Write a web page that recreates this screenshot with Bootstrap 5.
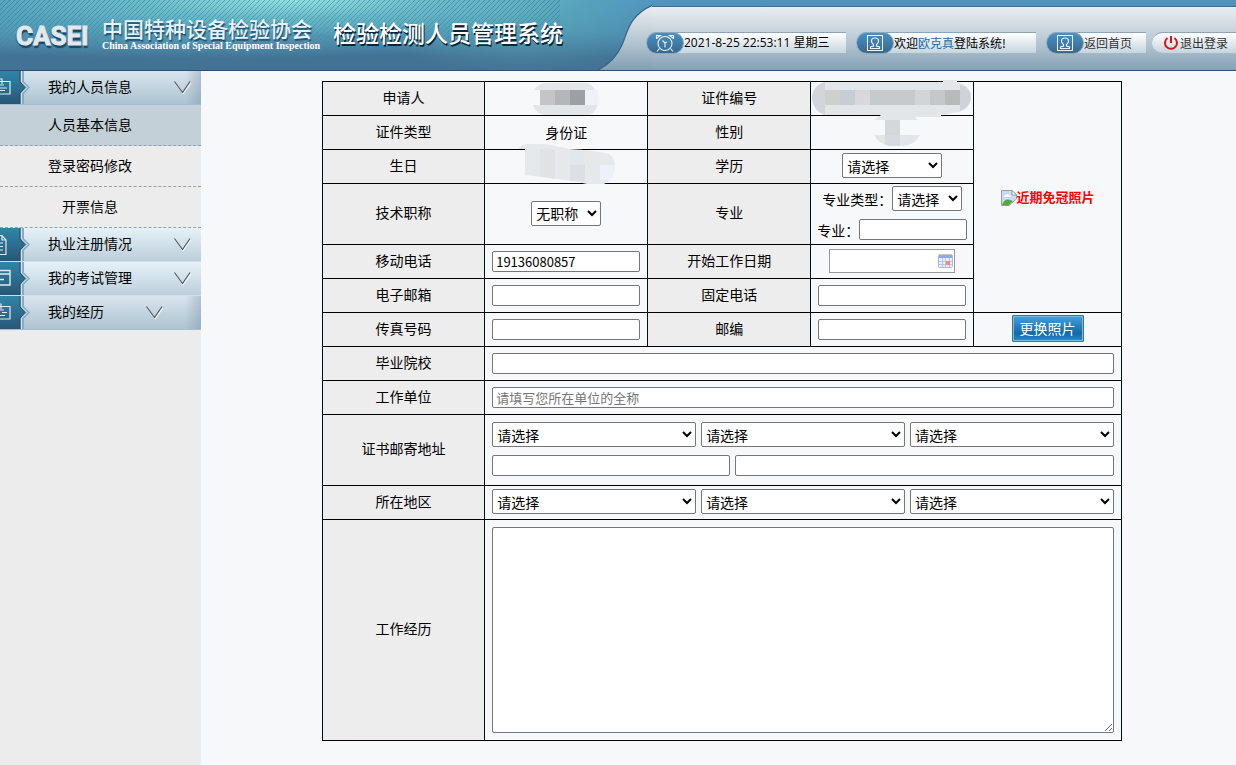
<!DOCTYPE html>
<html lang="zh-CN">
<head>
<meta charset="utf-8">
<meta name="viewport" content="width=device-width, initial-scale=1">
<title>检验检测人员管理系统</title>
<link href="https://cdn.jsdelivr.net/npm/bootstrap@5.3.0/dist/css/bootstrap.min.css" rel="stylesheet">
<style>
  body { font: 14px/20px "Noto Sans CJK SC", sans-serif; color: #000; background: #f7f8fa; }
  a { text-decoration: none; }

  /* top banner */
  .banner { position: relative; height: 71px; overflow: hidden; border-bottom: 1px solid #2c4f72;
    background: radial-gradient(ellipse 300px 36px at 290px 0, rgba(150,230,228,.9) 0, rgba(120,205,210,.5) 50%, rgba(90,170,190,0) 100%),
      radial-gradient(ellipse 460px 60px at 200px 0, rgba(95,180,192,.8) 0, rgba(90,175,190,.6) 50%, rgba(80,160,190,0) 100%),
      radial-gradient(ellipse 160px 60px at 520px 14px, rgba(95,175,185,.7) 0, rgba(80,160,190,0) 100%),
      linear-gradient(#4f93c1 0, #4b8ab0 45%, #427294 80%, #427294 100%); }
  .banner::before { content: ""; position: absolute; inset: 0 auto 0 0; width: 560px;
    background: url("data:image/svg+xml,%3Csvg xmlns='http://www.w3.org/2000/svg' width='5' height='5'%3E%3Cpath d='M-1 6L6-1M-1 1L1-1M4 6L6 4' stroke='%23205f7f' stroke-width='.7'/%3E%3C/svg%3E");
    -webkit-mask-image: linear-gradient(#000 0, rgba(0,0,0,.6) 25px, transparent 50px);
    mask-image: linear-gradient(#000 0, rgba(0,0,0,.6) 25px, transparent 50px); opacity: .6; }
  .brand { position: relative; }
  .logo-word { width: 74px; font: bold 26px/40px Roboto, "Liberation Sans", sans-serif; color: #e3e8ec;
    -webkit-text-stroke: 1px #e3e8ec; text-shadow: 1px 3px 1px #1d4663, -1px 1px 1px #2c5f7c; }
  .org-cn { font-size: 21px; line-height: 24px; font-weight: 500; color: #e6f2f7; text-shadow: 1px 2px 1px #24506e; }
  .org-en { font: bold 10px/12px "Liberation Serif", serif; color: #fff; }
  .sys-name { font-size: 23px; line-height: 32px; font-weight: 500; color: #fff; text-shadow: 1px 2px 0 #0d2534; margin: 0 0 0 13px; }
  .curve { width: 54px; height: 65px; flex: none; }
  .panel { margin-top: 6px; height: 65px; border-top: 1px solid #3f6f92; background: linear-gradient(#eaeef2, #b6c7d2 55%, #829fb5); font-size: 12px; }
  .pill { height: 22px; margin: 25px 10px 0 0; display: flex; align-items: center; white-space: nowrap; background: linear-gradient(#fff, #c6d5de);
    border-top: 1px solid #8ca6b8; border-bottom: 1px solid #a4b8c5; border-radius: 11px 0 0 11px; color: #000; }
  .pill time { font-family: "Open Sans", "Noto Sans CJK SC", sans-serif; }
  .pill-cap { width: 38px; height: 22px; flex: none; border-radius: 11px; border: 1px solid #89a9c0; background: linear-gradient(#4a90c2, #38688e);
    display: flex; align-items: center; justify-content: center; }
  .pill-home, .pill-exit { color: #333; }
  .w-clock { width: 200px; margin-left: -6px; } .w-user { width: 180px; }
  .w-home { width: 100px; margin-right: 6px; } .w-exit { width: 84px; margin-right: 0; }
  .user-link { color: #1a6ca8; }

  /* side menu */
  .side { width: 201px; flex: none; background: #ececec; }
  .side a { color: #000; }
  .side-head { height: 34px; display: flex; align-items: center; line-height: 18px; border-bottom: 1px solid #d2dfe8; background: linear-gradient(#e6f1f8, #bccfdb); }
  .side-head.shaded { border-bottom-color: #a9b9d8; background: linear-gradient(90deg, transparent 185px, rgba(120,145,160,.4)), linear-gradient(#d9e5ee, #adc3d1); }
  .side-head svg.tab { width: 32px; height: 33px; margin-right: 16px; flex: none; }
  .side-head svg.vee { width: 17px; height: 13px; margin-left: 42px; }
  .side-sub a { display: block; height: 41px; line-height: 39px; padding-right: 21px; text-align: center; border-bottom: 1px dashed #86a7ba; }
  .side-sub a.current { background: #c3d0d7; }

  /* form table */
  .main-area { padding: 10px 0 24px 7px; min-width: 0; }
  .form-grid { --bs-table-bg: transparent; --bs-table-color: #000; max-width: 800px; margin: 0 auto; table-layout: fixed; border-color: #000; text-align: center; vertical-align: middle; }
  .form-grid > tbody > tr > * { height: 34px; padding: 0 0 2px; border-color: #000f0f; color: #000; }
  .form-grid > tbody > tr > th { font-weight: 400; background: #ededed; padding-bottom: 4px; }
  .form-grid > tbody > tr > td.wide { padding: 0 7px 2px; }
  .form-grid > tbody > tr > td.roomy { padding: 7px; }
  .form-grid input, .form-grid textarea { border: 1px solid #767676; border-radius: 2px; background: #fff; font-size: 13px; padding: 1px 3px; color: #000; }
  .form-grid input { height: 21px; width: 148px; vertical-align: middle; }
  .form-grid select { height: 25px; font-size: 14px; border: 1px solid #767676; border-radius: 2px; background-color: #fff; color: #000; min-width: 0; }
  .form-grid ::placeholder { color: #757575; }
  .form-grid .flex-fill { width: 0; }
  .form-grid textarea { display: block; width: 100%; height: 206px; resize: both; }
  .w-70 { width: 70px; } .w-edu { width: 100px; }
  .form-grid .in-major { width: 108px; }
  .form-grid .in-area { width: 238px; }
  .tall { height: 61px !important; } .taller { height: 71px !important; } .tallest { height: 221px !important; }
  .gap-5px { gap: 5px; }
  .date-box { width: 126px; height: 24px; border: 1px solid #999; background: #fff; }
  .form-grid .date-box input { border: 0; width: 108px; height: 20px; }
  .veil { display: block; width: 162px; height: 33px; margin: 0 auto -2px; overflow: visible; }
  .photo-alt { font-size: 13px; font-weight: 700; color: #f00; }
  .btn-photo { height: 27px; width: 72px; padding: 0 0 2px; font-size: 14px; line-height: 20px; color: #fff; border: 1px solid #3f7777; border-radius: 1px;
    background: linear-gradient(#46a0dc, #0f69ab 70%, #2f8dcc); box-shadow: inset 0 0 0 1px #78bfe6; }
  .btn-photo:hover { color: #fff; }
</style>
</head>
<body class="d-flex flex-column min-vh-100">

<svg class="position-absolute" width="0" height="0" aria-hidden="true">
  <linearGradient id="teal" x2="0" y2="1"><stop stop-color="#2f86a8"/><stop offset="1" stop-color="#2a5675"/></linearGradient>
  <symbol id="vee" viewBox="0 0 17 13"><path d="M1.500 2L9 13L17 2" fill="none" stroke="#fff"/><path d="M.5.500L8.500 11.500L16 .5" fill="none" stroke="#4b5960" stroke-width="1.100"/></symbol>
  <symbol id="portrait" viewBox="0 0 18 18"><rect x="1.500" y="1.500" width="15" height="15" fill="none" stroke="#e8f3fa"/><path d="M4.500 14.500V13l3-1V10.500C6 9.500 5.500 8.500 5.500 7C5.500 5 7 4 9 4S12.500 5 12.500 7C12.500 8.500 12 9.500 10.500 10.500V12l3 1V14.500z" fill="none" stroke="#e8f3fa" stroke-width="1.200"/></symbol>
  <symbol id="tab-base" viewBox="0 0 32 33">
    <path d="M20 0h4v10.500l6 6l-6 6V33h-4z" fill="#86abc2"/><path d="M21.500 0v11l6 5.500l-6 5.500v11" fill="none" stroke="#d3e3ed"/>
    <path d="M0 0h20v11l5 5.500l-5 5.500v11H0z" fill="url(#teal)"/><path d="M20 0v11l5 5.500l-5 5.500v11" fill="none" stroke="#234e69"/>
  </symbol>
</svg>

<header class="banner d-flex">
  <div class="brand d-flex align-items-start ps-3 text-nowrap">
    <div class="logo-word mt-3">CASEI</div>
    <div class="mt-3 ps-2 ms-1">
      <div class="org-cn">中国特种设备检验协会</div>
      <div class="org-en">China Association of Special Equipment Inspection</div>
    </div>
    <h1 class="sys-name mt-3">检验检测人员管理系统</h1>
  </div>
  <div class="d-flex ms-auto flex-shrink-0 position-relative">
    <svg class="curve mt-auto" viewBox="0 0 54 65" aria-hidden="true">
      <linearGradient id="silver" x2="0" y2="1"><stop stop-color="#eaeef2"/><stop offset=".55" stop-color="#b6c7d2"/><stop offset="1" stop-color="#829fb5"/></linearGradient>
      <path d="M0 65C12 59 19 51 24 40S31 10 54 .5V65z" fill="url(#silver)"/>
      <path d="M0 65C12 59 19 51 24 40S31 10 54 .5" fill="none" stroke="#3a668a" stroke-width="1.300"/>
    </svg>
    <div class="panel d-flex">
      <div class="pill w-clock">
        <span class="pill-cap"><svg width="20" height="18" viewBox="0 0 20 18" fill="none" stroke="#e8f3fa" stroke-width="1.100" aria-hidden="true"><circle cx="10" cy="9.500" r="7"/><path d="M1.500 5V1.500H6.500M18.500 5V1.500H13.500M1.500 4.500L5.500 1.500M18.500 4.500L14.500 1.500M4.500 14.500L2 17.500M15.500 14.500L18 17.500M7.500 6.500L10 9v4.500M10 9l2-1"/></svg></span>
        <time>2021-8-25 22:53:11 星期三</time>
      </div>
      <div class="pill w-user">
        <span class="pill-cap"><svg width="18" height="18" aria-hidden="true"><use href="#portrait"/></svg></span>
        <span>欢迎<a href="#" class="user-link">欧克真</a>登陆系统!</span>
      </div>
      <a href="#" class="pill pill-home w-home">
        <span class="pill-cap"><svg width="18" height="18" aria-hidden="true"><use href="#portrait"/></svg></span>返回首页
      </a>
      <a href="#" class="pill pill-exit w-exit ps-2">
        <svg class="ms-1" width="16" height="16" viewBox="0 0 16 16" fill="none" stroke="#dc1414" stroke-width="2" aria-hidden="true"><path d="M7 1v7M3.500 3A6 6 0 1 0 10.500 3"/></svg>退出登录
      </a>
    </div>
  </div>
</header>

<div class="d-flex flex-grow-1">
  <nav class="side">
    <a href="#" class="side-head shaded">
      <svg class="tab" viewBox="0 0 32 33" aria-hidden="true"><use href="#tab-base"/><path d="M0 10.500h10V23H0M0 14h4M0 17h7M0 19.500h5M-1 8h3v5" fill="none" stroke="#dfeaf1" stroke-width="1.200"/></svg>
      <span class="pb-1">我的人员信息</span><svg class="vee" aria-hidden="true"><use href="#vee"/></svg></a>
    <div class="side-sub">
      <a href="#" class="current">人员基本信息</a>
      <a href="#">登录密码修改</a>
      <a href="#">开票信息</a>
    </div>
    <a href="#" class="side-head">
      <svg class="tab" viewBox="0 0 32 33" aria-hidden="true"><use href="#tab-base"/><path d="M0 7.500h2L6 12V26.500H0M2 7.500V12H6M0 15h3M0 18.500h3M0 22h3" fill="none" stroke="#dfeaf1" stroke-width="1.200"/></svg>
      <span class="pb-1">执业注册情况</span><svg class="vee" aria-hidden="true"><use href="#vee"/></svg></a>
    <a href="#" class="side-head">
      <svg class="tab" viewBox="0 0 32 33" aria-hidden="true"><use href="#tab-base"/><path d="M0 8.500h10V23H0M0 12h10M0 17.500h4" fill="none" stroke="#dfeaf1" stroke-width="1.400"/></svg>
      <span class="pb-1">我的考试管理</span><svg class="vee" aria-hidden="true"><use href="#vee"/></svg></a>
    <a href="#" class="side-head shaded">
      <svg class="tab" viewBox="0 0 32 33" aria-hidden="true"><use href="#tab-base"/><path d="M0 10.500h10V23H0M0 14h4M2 16.500h5M0 19.500h5M-1 8h2v5" fill="none" stroke="#dfeaf1" stroke-width="1.200"/></svg>
      <span class="pb-1">我的经历</span><svg class="vee" aria-hidden="true"><use href="#vee"/></svg></a>
  </nav>

  <main class="main-area flex-grow-1">
    <form>
      <table class="table table-bordered form-grid">
        <colgroup><col style="width:20.300%"><col style="width:20.400%"><col style="width:20.400%"><col style="width:20.400%"><col></colgroup>
        <tbody>
          <tr>
            <th scope="row">申请人</th>
            <td><svg class="veil" viewBox="0 0 162 33" aria-hidden="true"><path d="M49 8Q54 1 61 1H101Q107 2 110 8zM48 23H113Q109 33 102 33H60Q50 31 48 23z" fill="#e2e6e9"/><path d="M55 8h15v15H55z" fill="#c5c5c5"/><path d="M70 8h15v15H70z" fill="#b5b6b9"/><path d="M85 8h15v15H85z" fill="#9e9fa4"/><path d="M100 8h12q3 7 1 15h-13z" fill="#eef2f6"/></svg></td>
            <th scope="row">证件编号</th>
            <td><svg class="veil" viewBox="0 0 162 33" aria-hidden="true"><path d="M14 0H132V-2H146V0Q160 3 160 16Q158 28 148 30L130 33V35H70V33H14Q2 29 1 16Q2 3 14 0z" fill="#e2e6e9"/><path d="M14 0v33Q2 29 1 16Q2 3 14 0z" fill="#d2d6da"/><path d="M14 8h15v15H14z" fill="#cfd0cb"/><path d="M29 8h15v15H29z" fill="#c8ccd5"/><path d="M44 8h15v15H44z" fill="#d6d8dc"/><path d="M59 8h45v15H59z" fill="#c7caca"/><path d="M104 8h15v15h-15z" fill="#d2d4d8"/><path d="M119 8h15v15h-15z" fill="#c5c7c8"/><path d="M134 8h15v15h-15z" fill="#b9bbbb"/><path d="M149 3Q160 5 160 16Q159 25 149 29z" fill="#cfd2d8"/></svg></td>
            <td rowspan="6"><svg width="16" height="16" viewBox="0 0 16 16" aria-hidden="true"><path d="M.5.500H11L15.500 5V9L8 15.500H.5z" fill="#c8daf8" stroke="#9a9a9a"/><path d="M11 .5V5h4.500z" fill="#fff" stroke="#9a9a9a"/><path d="M3 7q0-2 2-2q1-2 3 0q2 0 2 2z" fill="#fff"/><path d="M1 15q3-7 8-5l3 1l-4 4z" fill="#54a93c"/><path d="M9 16l7-6" stroke="#fff" stroke-width="1.500"/></svg><span class="photo-alt">近期免冠照片</span></td>
          </tr>
          <tr>
            <th scope="row">证件类型</th><td>身份证</td>
            <th scope="row">性别</th>
            <td><svg class="veil" viewBox="0 0 162 33" aria-hidden="true"><path d="M70-1H102Q104 2 107 4H63Q66 2 70-1zM63 19H109Q103 30 91 30H78Q68 28 63 19z" fill="#e2e6e9"/><path d="M74 4h15v15H74z" fill="#d5d7d9"/><path d="M74 19h15v11H78L74 28z" fill="#d6dbe0"/></svg></td>
          </tr>
          <tr>
            <th scope="row">生日</th>
            <td><svg class="veil" viewBox="0 0 162 33" aria-hidden="true"><path d="M33-1Q36-6 44-6H60L76-3L84-1Q110 0 124 4Q130 8 130 17Q129 30 119 34H102L88 31L40 25V-1z" fill="#e6e9eb"/><path d="M55-1h15v30L55 26z" fill="#e0e2e3"/><path d="M85 0h15v15H85z" fill="#e2e7eb"/><path d="M85 15h15v16H85z" fill="#dce0e4"/><path d="M115 15h15q0 10-5 15h-10z" fill="#eef2f8"/></svg></td>
            <th scope="row"><label for="edu">学历</label></th>
            <td><select id="edu" class="w-edu"><option>请选择</option></select></td>
          </tr>
          <tr>
            <th scope="row" class="tall"><label for="rank">技术职称</label></th>
            <td><select id="rank" class="w-70"><option>无职称</option></select></td>
            <th scope="row">专业</th>
            <td>
              <div class="d-flex flex-column gap-2 px-1">
                <div class="d-flex align-items-center justify-content-center"><label for="mtype">专业类型：</label><select id="mtype" class="w-70"><option>请选择</option></select></div>
                <div class="d-flex align-items-center justify-content-center"><label for="major">专业：</label><input id="major" class="in-major" type="text"></div>
              </div>
            </td>
          </tr>
          <tr>
            <th scope="row"><label for="mobile">移动电话</label></th><td><input id="mobile" type="text" value="19136080857"></td>
            <th scope="row"><label for="start">开始工作日期</label></th>
            <td><div class="date-box d-flex align-items-center mx-auto"><input id="start" type="text">
              <svg width="16" height="14" viewBox="0 0 16 14" aria-hidden="true"><rect x=".5" y=".5" width="14" height="13" rx="1" fill="#e9f0fa" stroke="#a9bddf"/><path d="M1 1h13v3H1z" fill="#8eaae0"/><path d="M1 .5h13" stroke="#c9c5bd"/><path d="M1 7.500h13M1 10.500h13M4.500 4v9M7.500 4v9M11.500 4v9" stroke="#b5c6e2"/><path d="M8 7h4v4H8z" fill="#ee8d76"/></svg></div></td>
          </tr>
          <tr>
            <th scope="row"><label for="mail">电子邮箱</label></th><td><input id="mail" type="text"></td>
            <th scope="row"><label for="tel">固定电话</label></th><td><input id="tel" type="text"></td>
          </tr>
          <tr>
            <th scope="row"><label for="fax">传真号码</label></th><td><input id="fax" type="text"></td>
            <th scope="row"><label for="zip">邮编</label></th><td><input id="zip" type="text"></td>
            <td><button type="button" class="btn btn-photo">更换照片</button></td>
          </tr>
          <tr>
            <th scope="row"><label for="school">毕业院校</label></th>
            <td colspan="4" class="wide"><input id="school" class="w-100" type="text"></td>
          </tr>
          <tr>
            <th scope="row"><label for="work">工作单位</label></th>
            <td colspan="4" class="wide"><input id="work" class="w-100" type="text" placeholder="请填写您所在单位的全称"></td>
          </tr>
          <tr>
            <th scope="row" class="taller"><label for="mprov">证书邮寄地址</label></th>
            <td colspan="4" class="wide">
              <div class="d-flex gap-5px mb-2">
                <select id="mprov" class="flex-fill"><option>请选择</option></select>
                <select class="flex-fill" aria-label="市"><option>请选择</option></select>
                <select class="flex-fill" aria-label="区县"><option>请选择</option></select>
              </div>
              <div class="d-flex gap-5px">
                <input type="text" class="in-area" aria-label="街道">
                <input type="text" class="flex-fill" aria-label="详细地址">
              </div>
            </td>
          </tr>
          <tr>
            <th scope="row"><label for="prov">所在地区</label></th>
            <td colspan="4" class="wide">
              <div class="d-flex gap-5px">
                <select id="prov" class="flex-fill"><option>请选择</option></select>
                <select class="flex-fill" aria-label="市"><option>请选择</option></select>
                <select class="flex-fill" aria-label="区县"><option>请选择</option></select>
              </div>
            </td>
          </tr>
          <tr>
            <th scope="row" class="tallest"><label for="history">工作经历</label></th>
            <td colspan="4" class="roomy"><textarea id="history"></textarea></td>
          </tr>
        </tbody>
      </table>
    </form>
  </main>
</div>
<script src="https://cdn.jsdelivr.net/npm/bootstrap@5.3.0/dist/js/bootstrap.bundle.min.js"></script>
</body>
</html>
